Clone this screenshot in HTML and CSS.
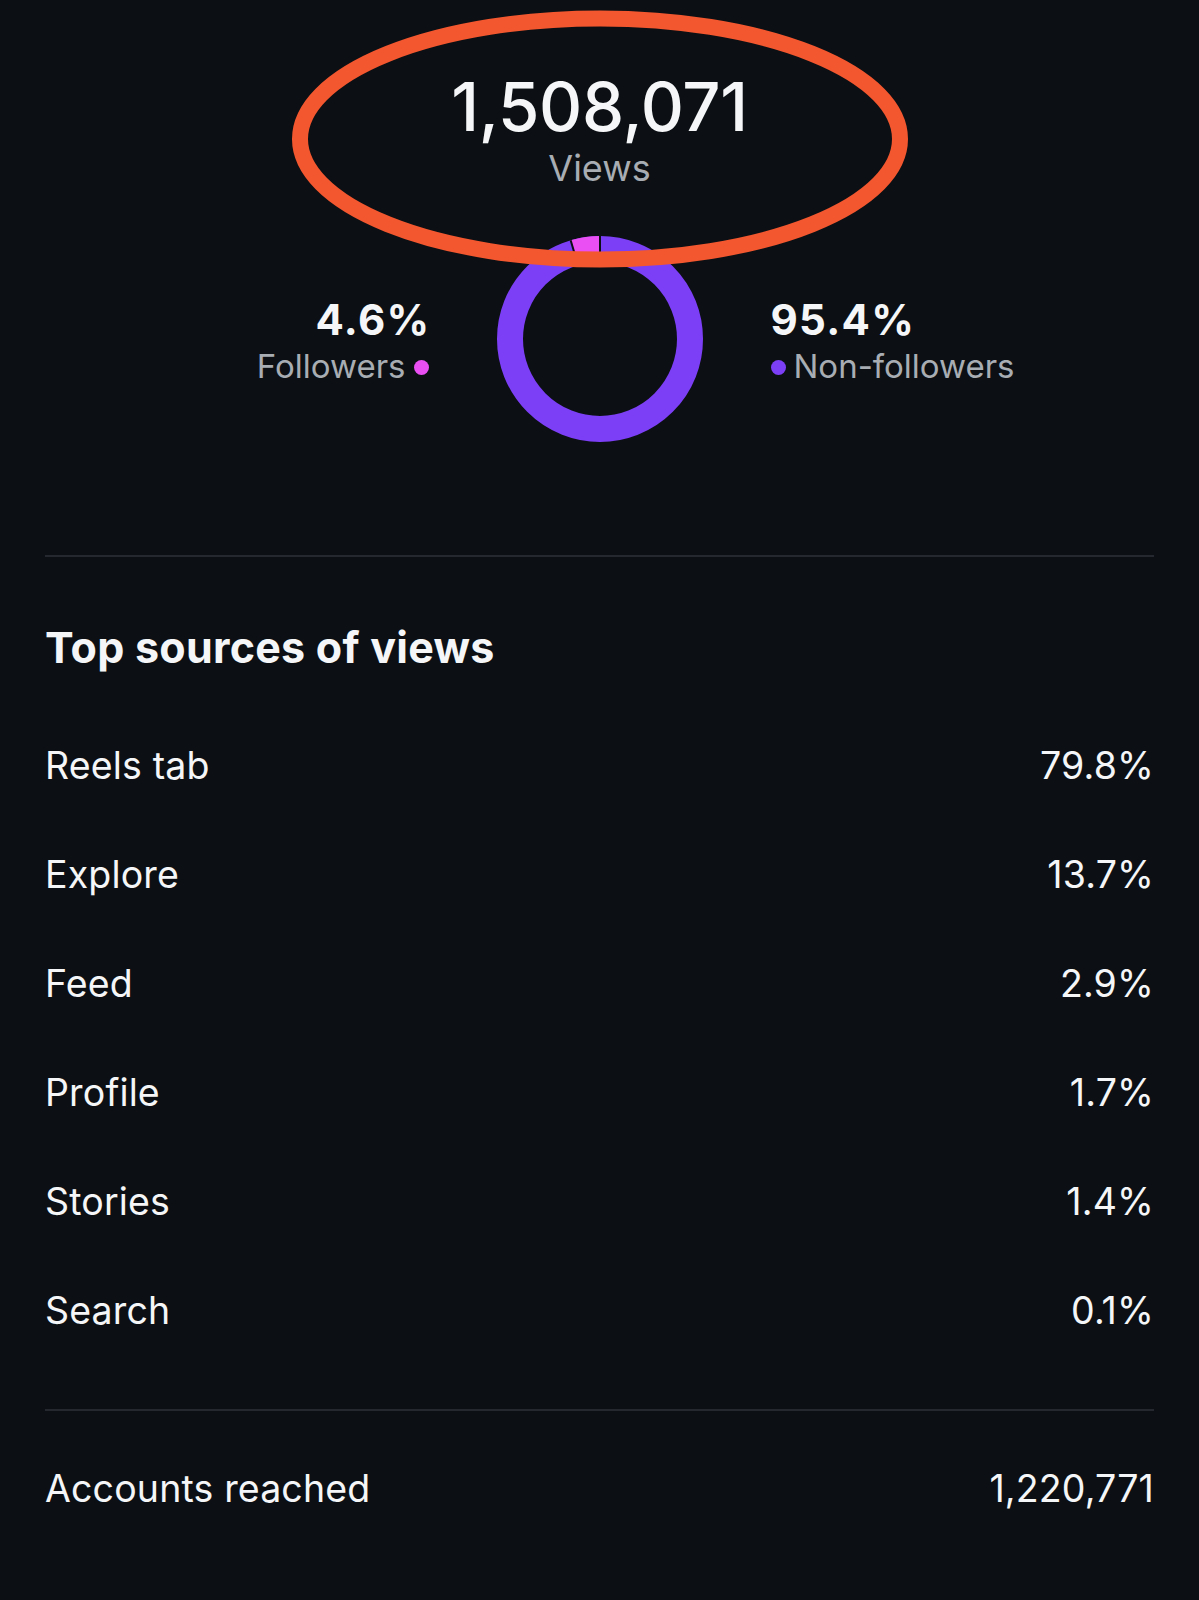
FILE: index.html
```html
<!DOCTYPE html>
<html lang="en">
<head>
<meta charset="utf-8">
<title>Views insights</title>
<link rel="stylesheet" href="styles.css">
</head>
<body>
<main class="page">
  <section class="hero">
    <div class="hero-number">1,508,071</div>
    <div class="hero-label">Views</div>
  </section>

  <section class="split">
    <div class="stat stat-left">
      <div class="stat-value">4.6%</div>
      <div class="stat-label">Followers<span class="dot dot-pink"></span></div>
    </div>
    <svg class="donut" viewBox="0 0 206 206" width="206" height="206">
      <circle cx="103" cy="103" r="90" fill="none" stroke="#7c3ff6" stroke-width="26"/>
      <path d="M77.35 16.73 A90 90 0 0 1 103 13" fill="none" stroke="#e94ff2" stroke-width="26"/>
      <line x1="103" y1="0" x2="103" y2="26" stroke="#0c1014" stroke-width="2"/>
      <line x1="73.64" y1="4.27" x2="81.05" y2="29.2" stroke="#0c1014" stroke-width="2"/>
    </svg>
    <div class="stat stat-right">
      <div class="stat-value">95.4%</div>
      <div class="stat-label"><span class="dot dot-purple"></span>Non-followers</div>
    </div>
  </section>

  <hr class="divider divider-top">

  <h2 class="heading">Top sources of views</h2>

  <ul class="sources">
    <li class="row"><span>Reels tab</span><span>79.8%</span></li>
    <li class="row"><span>Explore</span><span>13.7%</span></li>
    <li class="row"><span>Feed</span><span>2.9%</span></li>
    <li class="row"><span>Profile</span><span>1.7%</span></li>
    <li class="row"><span>Stories</span><span>1.4%</span></li>
    <li class="row"><span>Search</span><span>0.1%</span></li>
  </ul>

  <hr class="divider divider-bottom">

  <div class="row row-total"><span>Accounts reached</span><span>1,220,771</span></div>

  <svg class="annotation" viewBox="0 0 1199 290" width="1199" height="290" aria-hidden="true">
    <ellipse cx="600" cy="139" rx="300" ry="120.5" fill="none" stroke="#f3572f" stroke-width="16"/>
  </svg>
</main>
</body>
</html>
```

FILE: styles.css
```css
html, body {
  margin: 0;
  padding: 0;
  background: #0c1014;
}

body {
  font-family: Inter, "Noto Sans", "Liberation Sans", sans-serif;
  color: #f5f6f7;
  min-height: 1600px;
}

.page {
  position: relative;
  padding: 0 45px;
}

.hero {
  padding-top: 68px;
  text-align: center;
}

.hero-number {
  font-size: 67px;
  font-weight: 500;
  line-height: 78px;
  letter-spacing: -0.3px;
}

.hero-label {
  font-size: 36px;
  line-height: 44px;
  color: #a8adb3;
}

.split {
  margin-top: 46px;
  display: grid;
  grid-template-columns: 1fr 206px 1fr;
  column-gap: 68px;
  align-items: start;
}

.donut {
  display: block;
}

.stat {
  margin-top: 60px;
}

.stat-left {
  justify-self: end;
  text-align: right;
}

.stat-right {
  justify-self: start;
  text-align: left;
}

.stat-value {
  font-size: 42px;
  font-weight: 700;
  line-height: 48px;
  letter-spacing: 1.3px;
}

.stat-left .stat-value {
  margin-right: -2px;
}

.stat-label {
  font-size: 33px;
  line-height: 44px;
  color: #a8adb3;
  display: flex;
  align-items: center;
  gap: 8px;
}

.dot {
  display: inline-block;
  width: 15px;
  height: 15px;
  border-radius: 50%;
  margin-top: 2px;
}

.dot-pink {
  background: #e94ff2;
}

.dot-purple {
  background: #7c3ff6;
}

.divider {
  border: 0;
  height: 2px;
  background: #25292f;
  margin: 0;
}

.divider-top {
  margin-top: 113px;
}

.heading {
  margin: 64px 0 0;
  font-size: 43px;
  font-weight: 700;
  line-height: 52px;
  letter-spacing: 0.25px;
}

.sources {
  list-style: none;
  margin: 38px 0 0;
  padding: 0;
}

.row {
  display: flex;
  justify-content: space-between;
  font-size: 37.5px;
  line-height: 109px;
  letter-spacing: 0.15px;
}

.divider-bottom {
  margin-top: 44px;
}

.row-total {
  margin-top: 23px;
}

.annotation {
  position: absolute;
  left: 0;
  top: 0;
  pointer-events: none;
}
```
